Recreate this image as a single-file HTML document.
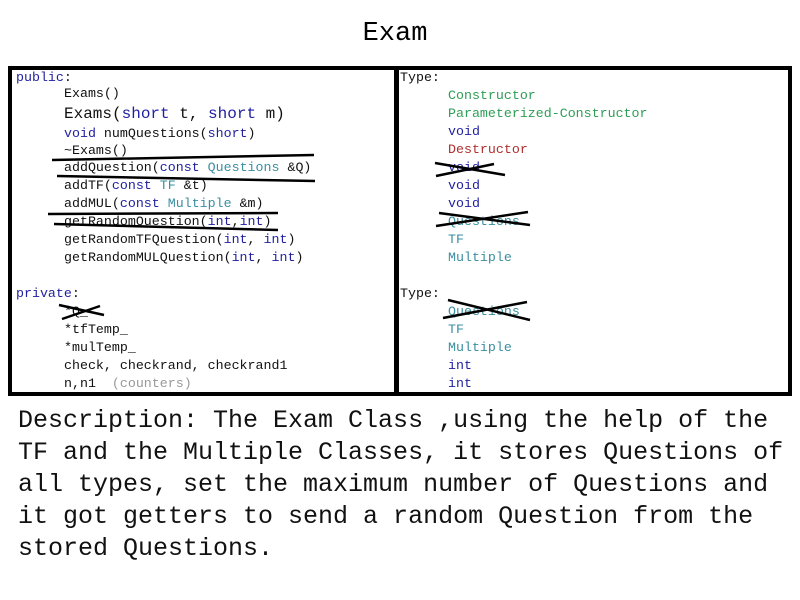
<!DOCTYPE html>
<html><head><style>
body{margin:0;width:800px;height:600px;background:#fff;position:relative;overflow:hidden;font-family:"Liberation Mono",monospace}
.t{position:absolute;font-size:13.3px;line-height:16px;white-space:pre;color:#111}
.k{color:#1f1fa0}.c{color:#3a8fa0}.g{color:#2e9e56}.r{color:#b03030}.gr{color:#999}
</style></head><body>
<div style="position:absolute;left:0;width:790px;top:19px;text-align:center;font-size:27px;color:#000">Exam</div>
<div style="position:absolute;left:8px;top:66px;width:776px;height:322px;border:4px solid #000"></div>
<div style="position:absolute;left:394px;top:66px;width:5px;height:330px;background:#000"></div>
<div class="t" style="left:16px;top:70px" ><span class="k">public</span>:</div>
<div class="t" style="left:64px;top:86px">Exams()</div>
<div class="t" style="left:64px;top:105px;font-size:16px;line-height:18px">Exams(<span class="k">short</span> t, <span class="k">short</span> m)</div>
<div class="t" style="left:64px;top:126px"><span class="k">void</span> numQuestions(<span class="k">short</span>)</div>
<div class="t" style="left:64px;top:143px">~Exams()</div>
<div class="t" style="left:64px;top:160px">addQuestion(<span class="k">const</span> <span class="c">Questions</span> &amp;Q)</div>
<div class="t" style="left:64px;top:178px">addTF(<span class="k">const</span> <span class="c">TF</span> &amp;t)</div>
<div class="t" style="left:64px;top:196px">addMUL(<span class="k">const</span> <span class="c">Multiple</span> &amp;m)</div>
<div class="t" style="left:64px;top:214px">getRandomQuestion(<span class="k">int</span>,<span class="k">int</span>)</div>
<div class="t" style="left:64px;top:232px">getRandomTFQuestion(<span class="k">int</span>, <span class="k">int</span>)</div>
<div class="t" style="left:64px;top:250px">getRandomMULQuestion(<span class="k">int</span>, <span class="k">int</span>)</div>
<div class="t" style="left:16px;top:286px"><span class="k">private</span>:</div>
<div class="t" style="left:64px;top:304px">*Q_</div>
<div class="t" style="left:64px;top:322px">*tfTemp_</div>
<div class="t" style="left:64px;top:340px">*mulTemp_</div>
<div class="t" style="left:64px;top:358px">check, checkrand, checkrand1</div>
<div class="t" style="left:64px;top:376px">n,n1  <span class="gr">(counters)</span></div>

<div class="t" style="left:400px;top:70px">Type:</div>
<div class="t g" style="left:448px;top:88px">Constructor</div>
<div class="t g" style="left:448px;top:106px">Parameterized-Constructor</div>
<div class="t k" style="left:448px;top:124px">void</div>
<div class="t r" style="left:448px;top:142px">Destructor</div>
<div class="t k" style="left:448px;top:160px">void</div>
<div class="t k" style="left:448px;top:178px">void</div>
<div class="t k" style="left:448px;top:196px">void</div>
<div class="t c" style="left:448px;top:214px">Questions</div>
<div class="t c" style="left:448px;top:232px">TF</div>
<div class="t c" style="left:448px;top:250px">Multiple</div>
<div class="t" style="left:400px;top:286px">Type:</div>
<div class="t c" style="left:448px;top:304px">Questions</div>
<div class="t c" style="left:448px;top:322px">TF</div>
<div class="t c" style="left:448px;top:340px">Multiple</div>
<div class="t k" style="left:448px;top:358px">int</div>
<div class="t k" style="left:448px;top:376px">int</div>

<svg style="position:absolute;left:0;top:0" width="800" height="600" stroke="#000" stroke-width="2.5" fill="none">
<path d="M52 160 L314 155 M57 176 L315 181"/>
<path d="M48 214 L278 213 M54 224 L278 230"/>
<path d="M59 305 L104 315 M62 319 L100 306"/>
<path d="M435 163 L505 175 M436 176 L494 164"/>
<path d="M439 213 L530 225 M436 226 L528 212"/>
<path d="M448 300 L530 320 M443 318 L527 302"/>
</svg>

<div style="position:absolute;left:18px;top:405px;font-size:25px;line-height:32px;white-space:pre;color:#111">Description: The Exam Class ,using the help of the
TF and the Multiple Classes, it stores Questions of
all types, set the maximum number of Questions and
it got getters to send a random Question from the
stored Questions.</div>
</body></html>
